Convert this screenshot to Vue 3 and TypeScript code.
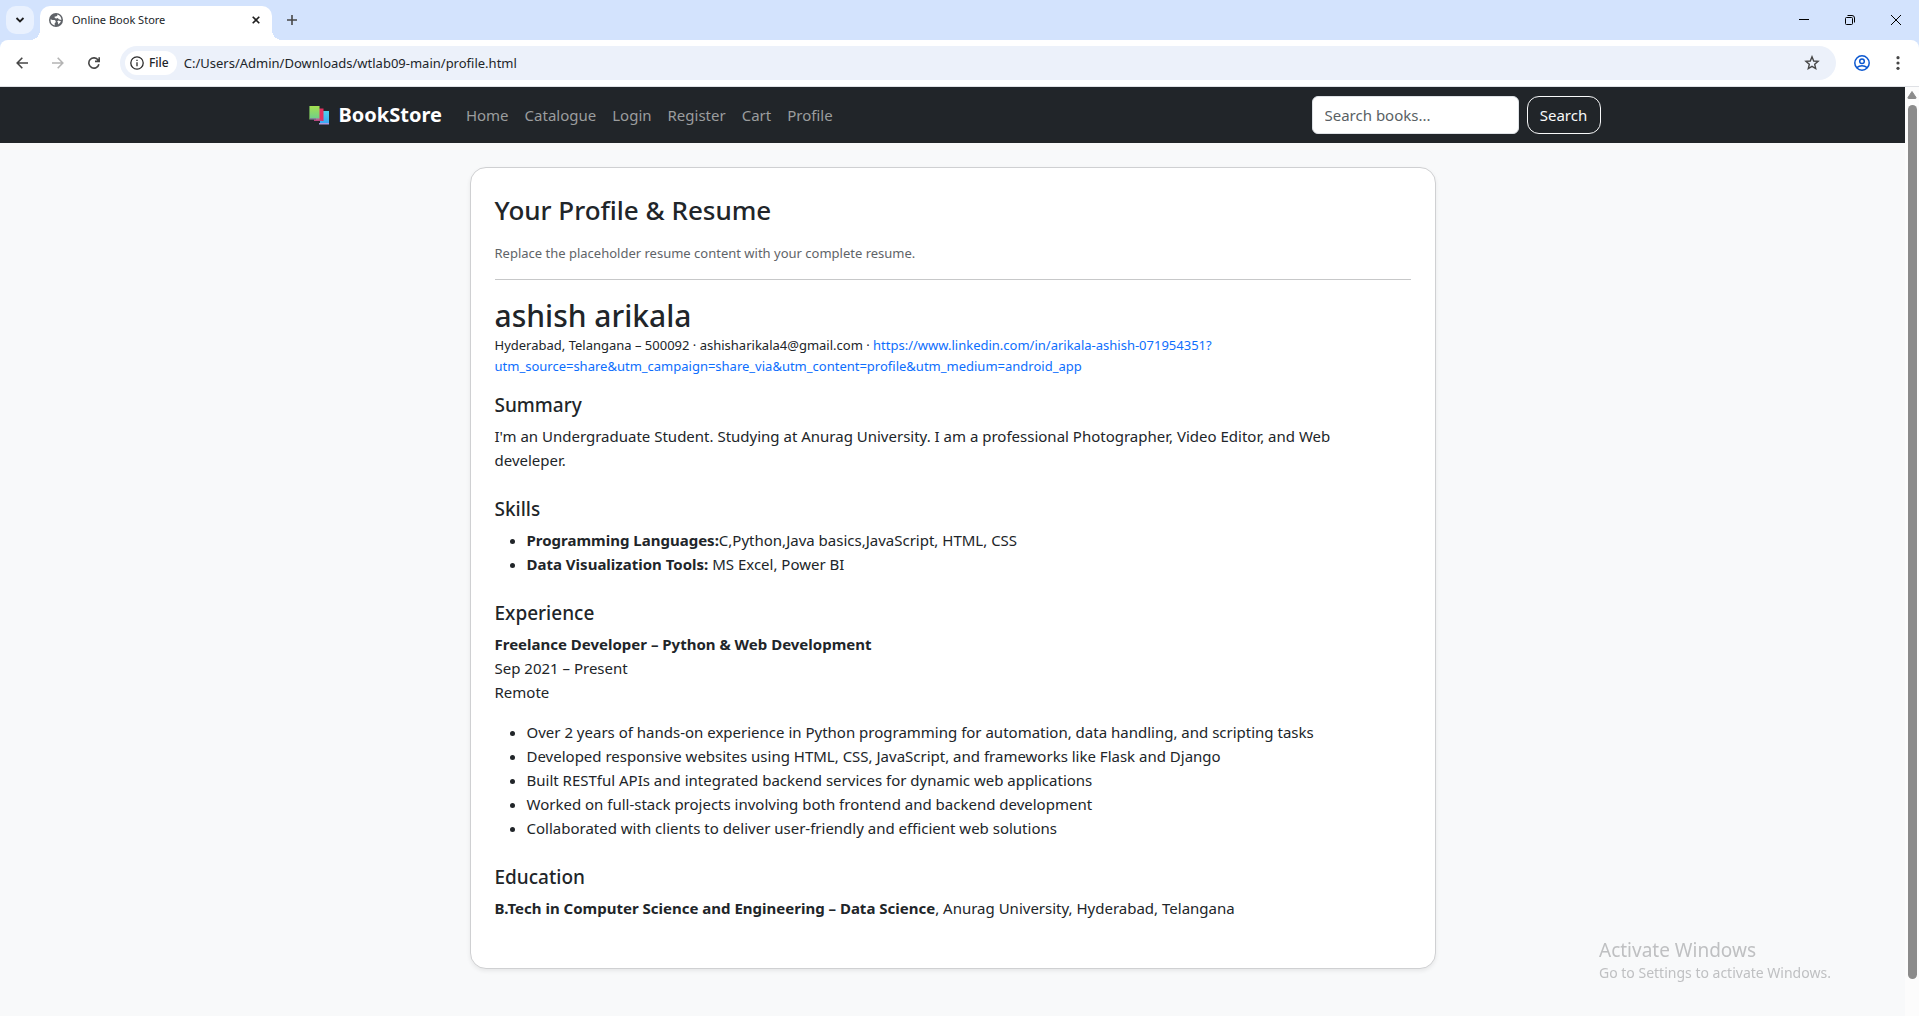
<script setup lang="ts">
import { ref } from 'vue'

interface Skill {
  label: string
  value: string
}

const address = ref('C:/Users/Admin/Downloads/wtlab09-main/profile.html')
const query = ref('')

const navLinks: string[] = ['Home', 'Catalogue', 'Login', 'Register', 'Cart', 'Profile']

const skills: Skill[] = [
  { label: 'Programming Languages:', value: 'C,Python,Java basics,JavaScript, HTML, CSS' },
  { label: 'Data Visualization Tools:', value: ' MS Excel, Power BI' },
]

const duties: string[] = [
  'Over 2 years of hands-on experience in Python programming for automation, data handling, and scripting tasks',
  'Developed responsive websites using HTML, CSS, JavaScript, and frameworks like Flask and Django',
  'Built RESTful APIs and integrated backend services for dynamic web applications',
  'Worked on full-stack projects involving both frontend and backend development',
  'Collaborated with clients to deliver user-friendly and efficient web solutions',
]
</script>

<template>
  <div class="browser">
    <div class="tabstrip">
      <button class="tab-search" type="button" aria-label="Search tabs">
        <svg width="10" height="8" viewBox="0 0 10 8"><path d="M1.5 2 5 5.5 8.5 2" fill="none" stroke="#1f1f1f" stroke-width="1.8" /></svg>
      </button>
      <div class="tab">
        <svg class="favicon" width="14" height="14" viewBox="0 0 14 14">
          <circle cx="7" cy="7" r="7" fill="#5f6368" />
          <path d="M1.6 6.2 3.4 7h2.3l1 1.1v1.2l-1 .9v2.2A5.6 5.6 0 0 1 1.6 6.2Z" fill="#fff" />
          <path d="M8.3 1.6v1.2L7 3.6H5.7v1.3l1.6.5 1.5-.3 1 1.2 2.6.6A5.6 5.6 0 0 0 8.3 1.6ZM9.2 7.6l-1 1 .9 1.2v1.6a5.6 5.6 0 0 0 2.9-3.1Z" fill="#fff" />
        </svg>
        <span class="tab-title">Online Book Store</span>
        <button class="tab-close" type="button" aria-label="Close tab">
          <svg width="8" height="8" viewBox="0 0 8 8"><path d="M.7.7 7.3 7.3M7.3.7.7 7.3" stroke="#1f1f1f" stroke-width="1.6" /></svg>
        </button>
      </div>
      <button class="new-tab" type="button" aria-label="New tab">
        <svg width="10" height="10" viewBox="0 0 10 10"><path d="M5 0v10M0 5h10" stroke="#474747" stroke-width="1.6" /></svg>
      </button>
      <div class="window-controls">
        <button type="button" aria-label="Minimize">
          <svg width="10" height="10" viewBox="0 0 10 10"><path d="M0 4.5h10" stroke="#000" /></svg>
        </button>
        <button type="button" aria-label="Restore">
          <svg width="10" height="10" viewBox="0 0 10 10" fill="none" stroke="#000"><rect x=".5" y="2.5" width="7" height="7" rx="1" /><path d="M2.5.5H7A2.5 2.5 0 0 1 9.5 3v4.5" /></svg>
        </button>
        <button type="button" aria-label="Close">
          <svg width="10" height="10" viewBox="0 0 10 10"><path d="M0 0 10 10M10 0 0 10" stroke="#000" /></svg>
        </button>
      </div>
    </div>

    <div class="toolbar-bed">
      <div class="toolbar">
        <button class="tool" type="button" aria-label="Back">
          <svg width="12" height="12" viewBox="0 0 12 12" fill="none" stroke="#474747" stroke-width="1.6"><path d="M6.3.8 1.2 6l5.1 5.2M1.2 6H12" /></svg>
        </button>
        <button class="tool" type="button" aria-label="Forward" disabled>
          <svg width="12" height="12" viewBox="0 0 12 12" fill="none" stroke="#b4b4b4" stroke-width="1.6"><path d="M5.7.8 10.8 6l-5.1 5.2M10.8 6H0" /></svg>
        </button>
        <button class="tool" type="button" aria-label="Reload">
          <svg width="12" height="12" viewBox="0 0 12 12" fill="none" stroke="#474747" stroke-width="1.6"><path d="M10.9 7.2A5.1 5.1 0 1 1 10.2 3.2M11.2.2v4.2H7" /></svg>
        </button>
        <div class="omnibox">
          <button class="chip" type="button">
            <svg width="14" height="14" viewBox="0 0 14 14" fill="none" stroke="#2b2b2b" stroke-width="1.3"><circle cx="7" cy="7" r="6.2" /><path d="M7 6.2V10.2M7 3.7v1.4" /></svg>
            File
          </button>
          <input v-model="address" class="address" type="text" aria-label="Address" />
          <button class="star" type="button" aria-label="Bookmark this page">
            <svg width="16" height="16" viewBox="0 0 16 16" fill="none" stroke="#474747" stroke-width="1.4"><path d="M8 1.8 9.7 6l4.4.4-3.4 2.9 1 4.3L8 11.3l-3.7 2.3 1-4.3-3.4-2.9L6.3 6Z" /></svg>
          </button>
        </div>
        <button class="tool account" type="button" aria-label="Account">
          <svg width="16" height="16" viewBox="0 0 16 16" fill="none" stroke="#0b57d0" stroke-width="1.5"><circle cx="8" cy="8" r="7.2" /><circle cx="8" cy="6.3" r="2.3" /><path d="M2.8 12.6c3-2.5 7.4-2.5 10.4 0" /></svg>
        </button>
        <button class="tool menu" type="button" aria-label="Menu">
          <svg width="4" height="14" viewBox="0 0 4 14" fill="#474747"><circle cx="2" cy="1.7" r="1.6" /><circle cx="2" cy="7" r="1.6" /><circle cx="2" cy="12.3" r="1.6" /></svg>
        </button>
      </div>
    </div>

    <div class="viewport">
      <div class="page">
        <nav class="navbar">
          <div class="container">
            <a class="brand" href="#">
              <svg width="20" height="20" viewBox="0 0 20 20">
                <defs>
                  <linearGradient id="leaf" x1="0" y1="0" x2="0" y2="1"><stop offset="0" stop-color="#a5e04f" /><stop offset="1" stop-color="#6fcf8a" /></linearGradient>
                  <linearGradient id="sky" x1="0" y1="0" x2="0" y2="1"><stop offset="0" stop-color="#4fd0ee" /><stop offset="1" stop-color="#3ba4f5" /></linearGradient>
                </defs>
                <path d="M11 6h9v13h-9z" fill="url(#sky)" />
                <path d="M10 18h10v1.5H10z" fill="#a99be0" />
                <path d="M7 3.5h7.5V16H7z" fill="#e2305f" />
                <path d="M5 14.5h8V16H5z" fill="#b9477f" />
                <path d="M1 1h9.5v12.5H1z" fill="url(#leaf)" />
                <path d="M0 1h1v13.5H0z" fill="#5f8f4c" />
                <path d="M1 13.3h9.5v1.2H1z" fill="#9a8fb0" />
              </svg>
              BookStore
            </a>
            <ul class="nav-links">
              <li v-for="link in navLinks" :key="link"><a href="#">{{ link }}</a></li>
            </ul>
            <form class="search" @submit.prevent>
              <input v-model="query" type="search" placeholder="Search books..." aria-label="Search books" />
              <button type="submit">Search</button>
            </form>
          </div>
        </nav>

        <main class="card">
          <h2>Your Profile &amp; Resume</h2>
          <p class="hint">Replace the placeholder resume content with your complete resume.</p>
          <hr />
          <header class="person">
            <h1>ashish arikala</h1>
            <p>
              Hyderabad, Telangana – 500092 · ashisharikala4@gmail.com ·
              <a href="#">https://www.linkedin.com/in/arikala-ashish-071954351?<wbr />utm_source=share&amp;utm_campaign=share_via&amp;utm_content=profile&amp;utm_medium=android_app</a>
            </p>
          </header>
          <section>
            <h3>Summary</h3>
            <p>I'm an Undergraduate Student. Studying at Anurag University. I am a professional Photographer, Video Editor, and Web<br />develeper.</p>
          </section>
          <section>
            <h3>Skills</h3>
            <ul>
              <li v-for="skill in skills" :key="skill.label"><strong>{{ skill.label }}</strong>{{ skill.value }}</li>
            </ul>
          </section>
          <section>
            <h3>Experience</h3>
            <p class="job"><strong>Freelance Developer – Python &amp; Web Development</strong><br />Sep 2021 – Present<br />Remote</p>
            <ul>
              <li v-for="duty in duties" :key="duty">{{ duty }}</li>
            </ul>
          </section>
          <section>
            <h3>Education</h3>
            <p><strong>B.Tech in Computer Science and Engineering – Data Science</strong>, Anurag University, Hyderabad, Telangana</p>
          </section>
        </main>
      </div>
      <div class="scrollbar" aria-hidden="true">
        <svg width="10" height="8" viewBox="0 0 10 8"><path d="M5 .5 9 6.5Q9.3 7.5 8.5 7.5H1.5Q.7 7.5 1 6.5Z" fill="#8b8b8b" stroke="#8b8b8b" /></svg>
        <div class="thumb"></div>
      </div>
    </div>

    <div class="watermark">
      <p class="watermark-title">Activate Windows</p>
      <p>Go to Settings to activate Windows.</p>
    </div>
  </div>
</template>

<style>
body {
  margin: 0;
}
</style>

<style scoped>
.browser {
  display: flex;
  flex-direction: column;
  min-height: 100vh;
  font-family: "Noto Sans", "Open Sans", sans-serif;
  font-size: 15px;
  line-height: 24px;
  color: #212529;
}
.browser * {
  box-sizing: border-box;
}
button,
input {
  font: inherit;
  color: inherit;
  border: 0;
  padding: 0;
  background: none;
}
button {
  display: flex;
  align-items: center;
  justify-content: center;
}
svg {
  display: block;
  flex: none;
}
h1,
h2,
h3,
p,
ul {
  margin: 0;
}
a {
  text-decoration: none;
}

.tabstrip {
  display: flex;
  height: 40px;
  padding: 6px 0 0 6px;
  background: #d3e3fd;
}
.tab-search {
  width: 28px;
  height: 28px;
  border-radius: 10px;
  background: #e9f1fe;
}
.tab {
  position: relative;
  display: flex;
  align-items: center;
  gap: 9px;
  width: 232px;
  height: 34px;
  margin-left: 6px;
  padding: 0 8px 6px 9px;
  border-radius: 10px 10px 0 0;
  background: #fff;
}
.tab::before,
.tab::after {
  content: "";
  position: absolute;
  bottom: 0;
  width: 10px;
  height: 10px;
}
.tab::before {
  right: 100%;
  background: radial-gradient(circle at 0 0, transparent 10px, #fff 10px);
}
.tab::after {
  left: 100%;
  background: radial-gradient(circle at 100% 0, transparent 10px, #fff 10px);
}
.tab-title {
  flex: 1;
  font-size: 11px;
}
.tab-close {
  width: 16px;
  height: 16px;
}
.new-tab {
  width: 28px;
  height: 28px;
  margin-left: 6px;
}
.window-controls {
  display: flex;
  margin-left: auto;
}
.window-controls button {
  width: 46px;
  height: 28px;
}

.toolbar-bed {
  background: #d3e3fd;
}
.toolbar {
  display: flex;
  align-items: center;
  height: 47px;
  padding: 0 5px 0 6px;
  border-bottom: 1px solid #dfe1e5;
  border-radius: 8px 8px 0 0;
  background: #fff;
}
.tool {
  width: 32px;
  height: 32px;
  margin-right: 4px;
}
.omnibox {
  display: flex;
  align-items: center;
  flex: 1;
  height: 34px;
  margin-left: 6px;
  padding: 0 16px 0 5px;
  border-radius: 17px;
  background: #ecf1fa;
}
.chip {
  gap: 5px;
  height: 24px;
  padding: 0 8px 0 5px;
  border-radius: 12px;
  background: #fff;
  font-size: 12px;
  font-weight: 500;
}
.address {
  flex: 1;
  margin-left: 7px;
  font-size: 13px;
}
.account {
  margin: 0 4px 0 10px;
}
.menu {
  margin: 0;
}

.viewport {
  display: flex;
  flex: 1;
}
.page {
  flex: 1;
  padding-bottom: 24px;
  background: #f8f9fa;
}
.navbar {
  background: #212529;
}
.container {
  display: flex;
  align-items: center;
  max-width: 1320px;
  height: 56px;
  margin: 0 auto;
  padding: 0 12px;
}
.brand {
  display: flex;
  align-items: center;
  gap: 10px;
  margin: 0 16px 0 4px;
  font-size: 20px;
  font-weight: 700;
  color: #fff;
}
.nav-links {
  display: flex;
  padding: 0;
  list-style: none;
}
.nav-links a {
  padding: 8px;
  color: #9b9d9e;
}
.search {
  display: flex;
  gap: 8px;
  margin-left: auto;
}
.search input {
  width: 207px;
  height: 38px;
  padding: 0 12px;
  border: 1px solid #dee2e6;
  border-radius: 6px;
  background: #fff;
}
.search input::placeholder {
  color: #595f64;
  opacity: 1;
}
.search button {
  width: 74px;
  height: 38px;
  border: 1px solid #f8f9fa;
  border-radius: 12px;
  color: #f8f9fa;
}

.card {
  max-width: 966px;
  margin: 24px auto 0;
  padding: 24px;
  border: 1px solid #cfd0d2;
  border-radius: 16px;
  background: #fff;
  box-shadow: 0 2px 4px rgba(0, 0, 0, 0.075);
}
h1,
h2,
h3 {
  font-weight: 500;
}
h2 {
  font-size: 26px;
  line-height: 36px;
}
.hint {
  margin: 15px 0;
  font-size: 13px;
  line-height: 21px;
  color: #5f6468;
}
hr {
  margin: 0 0 17px;
  border: 0;
  border-top: 1px solid #c7c8c9;
}
h1 {
  font-size: 30px;
  line-height: 38px;
}
.person {
  margin-bottom: 16px;
}
.person p {
  font-size: 13px;
  line-height: 21px;
}
.person a {
  color: #0d6efd;
}
section {
  padding-bottom: 25px;
}
section:last-child {
  padding-bottom: 24px;
}
h3 {
  margin-bottom: 7px;
  font-size: 19px;
  line-height: 24px;
}
.card ul {
  padding-left: 32px;
}
.job {
  margin-bottom: 16px;
}

.scrollbar {
  display: flex;
  flex-direction: column;
  align-items: center;
  gap: 6px;
  width: 14px;
  padding: 4px 0 37px;
  background: #fcfcfc;
}
.thumb {
  flex: 1;
  width: 9px;
  border-radius: 5px;
  background: #8b8b8b;
}

.watermark {
  position: fixed;
  right: 84px;
  bottom: 33px;
  width: 236px;
  color: #bfc0c2;
  white-space: nowrap;
  pointer-events: none;
}
.watermark p {
  font-size: 14px;
  line-height: 20px;
}
.watermark .watermark-title {
  font-size: 19px;
  line-height: 26px;
}
</style>
